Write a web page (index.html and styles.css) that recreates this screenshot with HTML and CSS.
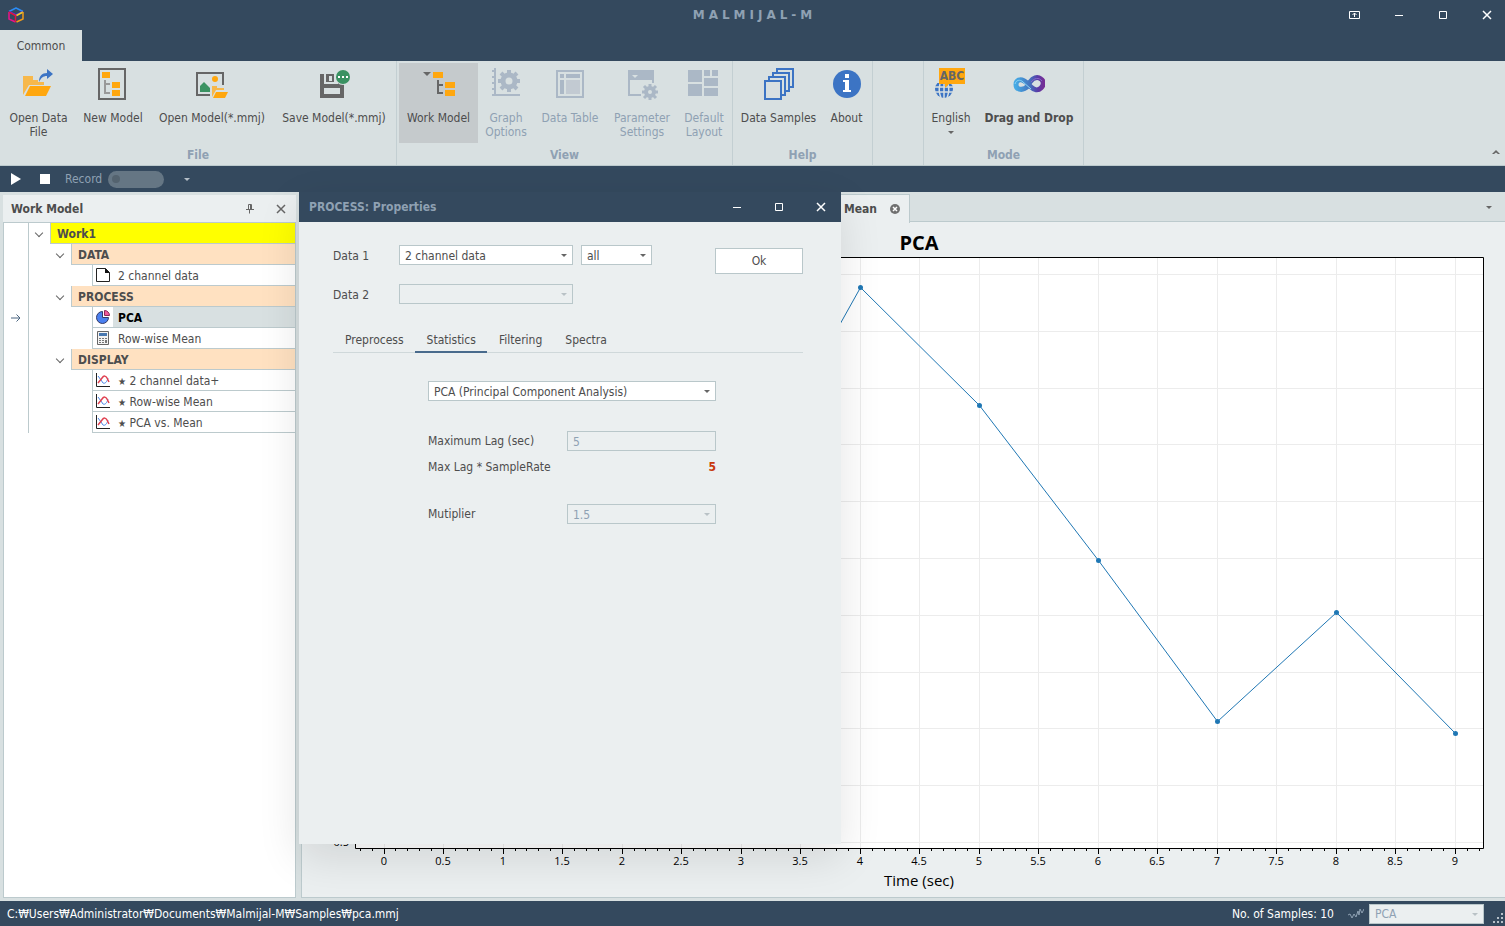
FILE: index.html
```html
<!DOCTYPE html>
<html lang="en">
<head>
    <meta charset="UTF-8">
    <title>MALMIJAL-M</title>
    <link rel="stylesheet" href="styles.css">
</head>
<body>
<header class="titlebar">
    <svg class="logo" width="16" height="16" viewBox="0 0 16 16" fill="none" stroke-width="1.5" stroke-linejoin="round">
        <path d="M1 4.500L8 1l7 3.500" stroke="#2b8cf5"/>
        <path d="M1 4.500L8 8l7-3.500" stroke="#4a35f0"/>
        <path d="M1 5v7l6.500 3" stroke="#e6148c"/>
        <path d="M1 5l6.500 3.500V15" stroke="#e0143c"/>
        <path d="M15 5L8.500 8.500" stroke="#f5d020"/>
        <path d="M15 5v7L8.500 15" stroke="#f09a1a"/>
    </svg>
    <h1>MALMIJAL-M</h1>
    <div class="window-buttons main-buttons">
        <button aria-label="Ribbon display"><svg width="12" height="10" viewBox="0 0 12 10" fill="none" stroke="#fff"><path d="M.5 1.500h10v7H.5zM5.500 7V3M3.500 5l2-2 2 2"/></svg></button>
        <button aria-label="Minimize"><svg width="10" height="10" viewBox="0 0 10 10" stroke="#fff"><path d="M1 5.500h8"/></svg></button>
        <button aria-label="Maximize"><svg width="10" height="10" viewBox="0 0 10 10" fill="none" stroke="#fff"><path d="M1.500 1.500h7v7h-7z"/></svg></button>
        <button aria-label="Close"><svg width="10" height="10" viewBox="0 0 10 10" stroke="#fff" stroke-width="1.500"><path d="M1 1l8 8M9 1L1 9"/></svg></button>
    </div>
</header>

<nav class="ribbon-tabs"><button class="ribbon-tab">Common</button></nav>

<div class="ribbon">
    <section class="group group-file">
        <div class="tools">
            <button class="tool">
                <svg width="32" height="32" viewBox="0 0 32 32"><path d="M0 8h10v4h5v2h6v3H6L0 27z" fill="#f7b84b"/><path d="M7 18h21l-5 10H2z" fill="#ffa70f"/><path d="M16 14c0-6 3-9 8-9V1l6 5-6 5V8c-4 0-6 2-8 6z" fill="#3c74c4"/></svg>
                <span>Open Data<br>File</span>
            </button>
            <button class="tool">
                <svg width="32" height="32" viewBox="0 0 32 32"><path d="M2 1h26v30H2z" fill="none" stroke="#666" stroke-width="2"/><path d="M5 4h8v6H5zM15 14h8v6h-8zM15 22h8v6h-8z" fill="#ffa70f"/><path d="M8 12v13h5M8 16h5" fill="none" stroke="#999" stroke-width="2"/></svg>
                <span>New Model</span>
            </button>
            <button class="tool">
                <svg width="32" height="32" viewBox="0 0 32 32"><path d="M14 27H1V5h26v12" fill="none" stroke="#666" stroke-width="2"/><circle cx="19" cy="11" r="3" fill="#ffa70f"/><path d="M4 24v-6l4-4 6 6v4z" fill="#3a9262"/><path d="M16 18h5v2h7v2h-8l-4 7z" fill="#f7b84b"/><path d="M20 24h12l-3 6H17z" fill="#ffa70f"/></svg>
                <span>Open Model(*.mmj)</span>
            </button>
            <button class="tool">
                <svg width="32" height="32" viewBox="0 0 32 32"><path d="M2 6h4v10h14v-2h6v16H2zM8 6h8v8H8zM6 20v6h16v-6z" fill="#666" fill-rule="evenodd"/><path d="M11 8h3v5h-3z" fill="#d8e0e1"/><circle cx="25" cy="9" r="8" fill="#d8e0e1"/><circle cx="25" cy="9" r="7" fill="#3a9262"/><path d="M20 8h2v2h-2zM24 8h2v2h-2zM28 8h2v2h-2z" fill="#fff"/></svg>
                <span>Save Model(*.mmj)</span>
            </button>
        </div>
        <h2>File</h2>
    </section>
    <section class="group group-view">
        <div class="tools">
            <button class="tool pressed">
                <svg width="32" height="32" viewBox="0 0 32 32"><path d="M0 4h8L4 8z" fill="#666"/><path d="M10 4h10v6H10zM22 14h10v6H22zM22 22h10v6H22z" fill="#ffa70f"/><path d="M15 12v13h5M15 17h5" fill="none" stroke="#666" stroke-width="2"/></svg>
                <span>Work Model</span>
            </button>
            <button class="tool" disabled>
                <svg width="32" height="32" viewBox="0 0 32 32" fill="none" stroke="#abb8c6" stroke-width="2"><path d="M5 0v27h25M2 3h3M2 9h3M2 15h3M2 21h3M2 27h3"/><circle cx="19" cy="13" r="6" stroke-width="5"/><path d="M19 2v4M19 20v4M8 13h4M26 13h4M11 5l3 3M24 18l3 3M27 5l-3 3M14 18l-3 3" stroke-width="4"/></svg>
                <span>Graph<br>Options</span>
            </button>
            <button class="tool" disabled>
                <svg width="32" height="32" viewBox="0 0 32 32"><path d="M3 3h26v26H3z" fill="none" stroke="#abb8c6" stroke-width="2"/><path d="M6 6h4v4H6zM12 6h14v4H12zM6 12h4v14H6z" fill="#abb8c6"/><path d="M12 12h14v14H12z" fill="#c2cad2"/></svg>
                <span>Data Table</span>
            </button>
            <button class="tool" disabled>
                <svg width="32" height="32" viewBox="0 0 32 32"><path d="M2 2h26v13h-2v-3H4v14h11v2H2z" fill="#abb8c6"/><path d="M6 7h6l-3 3z" fill="#d8e0e1"/><g fill="none" stroke="#abb8c6"><circle cx="24" cy="24" r="4" stroke-width="4"/><path d="M24 16v3M24 29v3M16 24h3M29 24h3M18 18l3 3M27 27l3 3M30 18l-3 3M21 27l-3 3" stroke-width="3"/></g></svg>
                <span>Parameter<br>Settings</span>
            </button>
            <button class="tool" disabled>
                <svg width="32" height="32" viewBox="0 0 32 32"><path d="M0 2h14v12H0zM0 16h14v12H0zM16 2h6v6h-6zM24 2h6v6h-6zM16 10h14v8H16zM16 20h14v8H16z" fill="#abb8c6"/></svg>
                <span>Default<br>Layout</span>
            </button>
        </div>
        <h2>View</h2>
    </section>
    <section class="group group-help">
        <div class="tools">
            <button class="tool">
                <svg width="32" height="32" viewBox="0 0 32 32" fill="none" stroke="#3c74c4" stroke-width="2"><path d="M2 13h16v18H2zM6 12V9h16v18h-3M10 8V5h16v18h-3M14 4V1h16v18h-3"/></svg>
                <span>Data Samples</span>
            </button>
            <button class="tool">
                <svg width="32" height="32" viewBox="0 0 32 32"><circle cx="16" cy="16" r="14" fill="#3c74c4"/><path d="M14 6h4v4h-4zM12 12h6v10h2v2h-8v-2h2v-8h-2z" fill="#fff"/></svg>
                <span>About</span>
            </button>
        </div>
        <h2>Help</h2>
    </section>
    <section class="group group-empty"></section>
    <section class="group group-mode">
        <div class="tools">
            <button class="tool">
                <svg width="32" height="32" viewBox="0 0 32 32"><circle cx="9" cy="21" r="9" fill="#3c74c4"/><path d="M0 19h18M0 24h18M9 14v17M5 16q-2 6 1 14M13 16q2 6-1 14" fill="none" stroke="#d8e0e1" stroke-width="1.500"/><path d="M0 10h18v5H0z" fill="#d8e0e1"/><path d="M4 0h26v16H14l-4 4v-4H4z" fill="#ffa70f"/><text x="17" y="12" class="icon-text">ABC</text></svg>
                <span>English</span>
                <i class="caret"></i>
            </button>
            <button class="tool strong">
                <svg width="32" height="32" viewBox="0 0 32 32" fill="none">
                    <defs><linearGradient id="loop" x1="0" x2="1"><stop offset="0" stop-color="#45a9e4"/><stop offset=".5" stop-color="#4474be"/><stop offset=".8" stop-color="#593ba8"/><stop offset="1" stop-color="#752f96"/></linearGradient></defs>
                    <path d="M15 18c-3 3-6 4-9 3-4-1-4-8 0-9 3-1 6 1 9 4l3 3c3 3 7 4 10 1 3-3 3-7 0-9-4-3-8-1-11 3z" stroke="url(#loop)" stroke-width="5"/>
                    <path d="M2 16c1-4 5-5 8-2l8 7" stroke="#8bd5f5"/>
                    <path d="M18 14c3-4 8-5 11-1" stroke="#8b68c9"/>
                </svg>
                <span>Drag and Drop</span>
            </button>
        </div>
        <h2>Mode</h2>
    </section>
    <button class="collapse" aria-label="Collapse ribbon"><svg width="8" height="5" viewBox="0 0 8 5"><path d="M0 5l4-4 4 4H6L4 3.500 2 5z" fill="#666"/></svg></button>
</div>

<div class="quickbar">
    <button aria-label="Run"><svg width="10" height="12" viewBox="0 0 10 12"><path d="M0 0l10 6-10 6z" fill="#fff"/></svg></button>
    <button aria-label="Stop"><svg width="10" height="10" viewBox="0 0 10 10"><path d="M0 0h10v10H0z" fill="#fff"/></svg></button>
    <label for="record">Record</label>
    <input type="checkbox" id="record" class="switch" disabled>
    <i class="caret light"></i>
</div>

<main class="workspace">
    <aside class="panel">
        <div class="panel-head">
            <h2>Work Model</h2>
            <button aria-label="Pin"><svg width="8" height="10" viewBox="0 0 8 10" fill="none" stroke="#666"><path d="M2.500 5.500v-5h3v5M4.500.5v5M0 5.500h8M3.500 6v3.500"/></svg></button>
            <button aria-label="Close panel"><svg width="10" height="10" viewBox="0 0 10 10" stroke="#666" stroke-width="1.500"><path d="M1 1l8 8M9 1L1 9"/></svg></button>
        </div>
        <div class="tree-area">
            <ul class="tree">
                <li class="level1"><i class="mark"></i><i class="fold"></i><span class="root">Work1</span></li>
                <li class="level2"><i class="mark"></i><i class="fold"></i><span class="category">DATA</span></li>
                <li class="level3"><i class="mark"></i><span class="item"><svg width="14" height="14" viewBox="0 0 14 14"><path d="M.5.5h9l4 4v9H.5z" fill="#fff" stroke="#222"/><path d="M9 0l5 5H9z" fill="#111"/></svg><b>2 channel data</b></span></li>
                <li class="level2"><i class="mark"></i><i class="fold"></i><span class="category">PROCESS</span></li>
                <li class="level3 selected"><i class="mark"><svg width="10" height="8" viewBox="0 0 10 8" fill="none" stroke="#4a6580"><path d="M0 4h9M5.500 .5L9 4 5.500 7.500"/></svg></i><span class="item"><svg width="14" height="14" viewBox="0 0 14 14"><path d="M6.500 1.500v6h6a6 6 0 1 1-6-6z" fill="#4a80f0" stroke="#333a66"/><path d="M8.500.5a5 5 0 0 1 5 5h-5z" fill="#f05a9c" stroke="#8c2858"/></svg><b>PCA</b></span></li>
                <li class="level3"><i class="mark"></i><span class="item"><svg width="14" height="14" viewBox="0 0 14 14"><path d="M1.500.5h11v13h-11z" fill="#f3f3f3" stroke="#666"/><path d="M3 2h8v3H3z" fill="#4878b0"/><path d="M3 7h2v1H3zM6 7h2v1H6zM9 7h2v1H9zM3 9h2v1H3zM6 9h2v1H6zM3 11h2v1H3zM6 11h2v1H6zM9 9h2v3H9z" fill="#777"/></svg><b>Row-wise Mean</b></span></li>
                <li class="level2"><i class="mark"></i><i class="fold"></i><span class="category">DISPLAY</span></li>
                <li class="level3"><i class="mark"></i><span class="item"><svg width="14" height="14" viewBox="0 0 14 14" fill="none"><path d="M.5 0v13.500H14" stroke="#222"/><path d="M2 3l3 4 2 3c2 1 4-1 5-5" stroke="#4a86e8"/><path d="M2 10l4-5c2-3 4-2 5 0l2 4" stroke="#e04050" stroke-width="1.500"/></svg><b><em>★</em> 2 channel data+</b></span></li>
                <li class="level3"><i class="mark"></i><span class="item"><svg width="14" height="14" viewBox="0 0 14 14" fill="none"><path d="M.5 0v13.500H14" stroke="#222"/><path d="M2 3l3 4 2 3c2 1 4-1 5-5" stroke="#4a86e8"/><path d="M2 10l4-5c2-3 4-2 5 0l2 4" stroke="#e04050" stroke-width="1.500"/></svg><b><em>★</em> Row-wise Mean</b></span></li>
                <li class="level3"><i class="mark"></i><span class="item"><svg width="14" height="14" viewBox="0 0 14 14" fill="none"><path d="M.5 0v13.500H14" stroke="#222"/><path d="M2 3l3 4 2 3c2 1 4-1 5-5" stroke="#4a86e8"/><path d="M2 10l4-5c2-3 4-2 5 0l2 4" stroke="#e04050" stroke-width="1.500"/></svg><b><em>★</em> PCA vs. Mean</b></span></li>
            </ul>
        </div>
    </aside>

    <section class="document">
        <div class="doc-tabs">
            <div class="doc-tab">
                <span>Mean</span>
                <button aria-label="Close tab"><svg width="10" height="10" viewBox="0 0 10 10"><circle cx="5" cy="5" r="5" fill="#707070"/><path d="M3 3l4 4M7 3L3 7" stroke="#fff" stroke-width="1.500"/></svg></button>
            </div>
            <i class="caret"></i>
        </div>
        <div class="chart"><svg id="chart"></svg></div>
    </section>

    <section class="dialog" role="dialog" aria-label="PROCESS: Properties">
        <div class="dialog-head">
            <h2>PROCESS: Properties</h2>
            <div class="window-buttons">
                <button aria-label="Minimize dialog"><svg width="10" height="10" viewBox="0 0 10 10" stroke="#fff"><path d="M1 5.500h8"/></svg></button>
                <button aria-label="Maximize dialog"><svg width="10" height="10" viewBox="0 0 10 10" fill="none" stroke="#fff"><path d="M1.500 1.500h7v7h-7z"/></svg></button>
                <button aria-label="Close dialog"><svg width="10" height="10" viewBox="0 0 10 10" stroke="#fff" stroke-width="1.500"><path d="M1 1l8 8M9 1L1 9"/></svg></button>
            </div>
        </div>
        <div class="dialog-body">
            <div class="data-form">
                <label for="data1">Data 1</label>
                <div class="combo"><select id="data1"><option>2 channel data</option></select></div>
                <div class="combo"><select aria-label="Channel"><option>all</option></select></div>
                <button class="ok">Ok</button>
                <label for="data2">Data 2</label>
                <div class="combo off"><select id="data2" disabled><option></option></select></div>
            </div>
            <div class="tabs" role="tablist">
                <button role="tab">Preprocess</button>
                <button role="tab" class="active">Statistics</button>
                <button role="tab">Filtering</button>
                <button role="tab">Spectra</button>
            </div>
            <div class="stats">
                <div class="combo"><select aria-label="Method"><option>PCA (Principal Component Analysis)</option></select></div>
                <div class="stats-row lag">
                    <label for="max_lag">Maximum Lag (sec)</label>
                    <input type="text" id="max_lag" value="5" disabled>
                </div>
                <div class="stats-row rate"><span>Max Lag * SampleRate</span><strong>5</strong></div>
                <div class="stats-row multiplier">
                    <label for="multiplier">Mutiplier</label>
                    <div class="combo off"><select id="multiplier" disabled><option>1.5</option></select></div>
                </div>
            </div>
        </div>
    </section>
</main>

<footer class="statusbar">
    <span class="path">C:₩Users₩Administrator₩Documents₩Malmijal-M₩Samples₩pca.mmj</span>
    <span>No. of Samples: 10</span>
    <svg width="16" height="14" viewBox="0 0 16 14" fill="none" stroke="#8fa1b3"><path d="M0 8l2-1 2 4 2-4 2 3 2-6 1 4 1-6 2 4 2-4"/></svg>
    <div class="combo off"><select aria-label="Series" disabled><option>PCA</option></select></div>
    <svg class="grip" width="10" height="10" viewBox="0 0 10 10" fill="#b5bfc8"><path d="M8 0h2v2H8zM4 4h2v2H4zM8 4h2v2H8zM0 8h2v2H0zM4 8h2v2H4zM8 8h2v2H8z"/></svg>
</footer>

<script src="chart.js"></script>
</body>
</html>
```
FILE: styles.css
```css
* {
    box-sizing: border-box;
}

body {
    margin: 0;
    min-height: 100vh;
    display: flex;
    flex-direction: column;
    font-family: "DejaVu Sans Condensed", "DejaVu Sans", "Noto Sans CJK KR", sans-serif;
    font-size: 12px;
    line-height: 14px;
    color: #4d4d4d;
    background-color: #34495e;
}

h1, h2, ul {
    margin: 0;
    padding: 0;
    font-size: 12px;
}

button, select, input {
    font: inherit;
    color: inherit;
    margin: 0;
    padding: 0;
    border: 0;
    background: none;
}

svg {
    display: block;
    flex: none;
}

.caret {
    width: 0;
    height: 0;
    border: 3px solid transparent;
    border-top-color: #666;
    border-bottom: 0;
}

.caret.light {
    border-top-color: #b5bfc8;
}

/* title bar */
.titlebar {
    position: relative;
    height: 30px;
    display: flex;
    align-items: center;
    justify-content: center;
}

.titlebar h1 {
    font-family: "DejaVu Sans", sans-serif;
    letter-spacing: 4px;
    padding-left: 4px;
    color: #8fa1b3;
}

.logo {
    position: absolute;
    left: 8px;
    top: 7px;
}

.window-buttons {
    display: flex;
    gap: 12px;
}

.window-buttons button {
    width: 30px;
    height: 30px;
    display: flex;
    align-items: center;
    justify-content: center;
}

.main-buttons {
    position: absolute;
    right: 3px;
    top: 0;
    gap: 14px;
}

/* ribbon */
.ribbon-tabs {
    height: 31px;
}

.ribbon-tab {
    width: 82px;
    height: 31px;
    background-color: #d8e0e1;
}

.ribbon {
    position: relative;
    display: flex;
    height: 105px;
    background-color: #d8e0e1;
    border-bottom: 1px solid #bccacd;
}

.group {
    padding: 2px;
    border-right: 1px solid #c3cfd2;
}

.tools {
    display: grid;
    gap: 1px;
    height: 80px;
}

.group-file .tools {
    grid-template-columns: 73px 74px 122px 120px;
}

.group-view .tools {
    grid-template-columns: 79px 54px 72px 70px 52px;
}

.group-help .tools {
    grid-template-columns: 87px 47px;
}

.group-mode .tools {
    grid-template-columns: 50px 104px;
}

.group-empty {
    width: 51px;
}

.tool {
    display: flex;
    flex-direction: column;
    align-items: center;
    padding-top: 5px;
    white-space: nowrap;
}

.tool span {
    margin-top: 11px;
}

.tool .caret {
    margin-top: 6px;
}

.tool:disabled {
    color: #8fa1b3;
}

.tool.pressed {
    background-color: #c5cacc;
}

.strong {
    font-weight: bold;
}

.icon-text {
    font-size: 12px;
    font-weight: bold;
    text-anchor: middle;
    fill: #666;
}

.group h2 {
    margin-top: 5px;
    text-align: center;
    color: #8fa1b3;
}

.collapse {
    position: absolute;
    right: 5px;
    bottom: 11px;
}

.quickbar {
    height: 26px;
    display: flex;
    align-items: center;
    padding-left: 11px;
    color: #8fa1b3;
}

.quickbar button + button {
    margin: 0 15px 0 19px;
}

.switch {
    appearance: none;
    width: 56px;
    height: 17px;
    margin: 0 20px 0 6px;
    padding: 4px;
    border-radius: 9px;
    background-color: #657684;
}

.switch::before {
    content: "";
    display: block;
    width: 8px;
    height: 8px;
    border-radius: 50%;
    background-color: #54636f;
}

/* work area */
.workspace {
    position: relative;
    flex: 1;
    display: flex;
    gap: 5px;
    padding: 0 0 3px 3px;
    min-height: 652px;
    background-color: #d8e0e1;
}

.panel {
    width: 293px;
    margin-top: 3px;
    display: flex;
    flex-direction: column;
}

.panel-head {
    display: flex;
    align-items: center;
    height: 27px;
    padding: 0 10px 0 8px;
    background-color: #ebeff0;
}

.panel-head h2 {
    flex: 1;
}

.panel-head button + button {
    margin-left: 22px;
}

.tree-area {
    flex: 1;
    background-color: #fff;
    border: 1px solid #bccacd;
}

.tree {
    list-style: none;
}

.tree li {
    display: flex;
    height: 21px;
}

.mark {
    display: flex;
    align-items: center;
    width: 25px;
    padding-left: 7px;
    border-right: 1px solid #bccacd;
}

.tree .level3 .mark {
    margin-right: 63px;
}

.tree .level2 .mark {
    margin-right: 21px;
}

.fold {
    width: 21px;
    padding: 7px;
}

.fold::before {
    content: "";
    display: block;
    width: 5px;
    height: 5px;
    border: solid #666;
    border-width: 0 1px 1px 0;
    rotate: 45deg;
}

.tree span {
    flex: 1;
    display: flex;
    border-left: 1px solid #bccacd;
    border-bottom: 1px solid #bccacd;
    line-height: 22px;
}

.root, .category {
    padding-left: 6px;
    font-weight: bold;
}

.root {
    background-color: #ff0;
}

.category {
    background-color: #ffe1c1;
}

.item svg {
    margin: 3px 3px 0;
}

.item b {
    flex: 1;
    height: 20px;
    padding-left: 5px;
    font-weight: normal;
}

.item em {
    font-style: normal;
    font-size: 10px;
}

.selected b {
    font-weight: bold;
    color: #000;
    background-color: #d8e0e1;
}

.document {
    flex: 1;
    min-width: 0;
    display: flex;
    flex-direction: column;
    border-left: 1px solid #bccacd;
    border-bottom: 1px solid #bccacd;
    background-color: #ebeff0;
}

.doc-tabs {
    display: flex;
    align-items: center;
    justify-content: space-between;
    height: 30px;
    padding: 2px 13px 0 0;
    background-color: #d8e0e1;
    border-bottom: 1px solid #bccacd;
}

.doc-tab {
    display: flex;
    align-items: center;
    justify-content: flex-end;
    gap: 13px;
    width: 608px;
    height: 29px;
    margin-bottom: -1px;
    padding-right: 9px;
    font-weight: bold;
    background-color: #ebeff0;
    border: 1px solid #bccacd;
    border-bottom: 0;
}

.chart {
    position: relative;
    flex: 1;
}

.chart svg {
    position: absolute;
    width: 100%;
    height: 100%;
    font-family: "Open Sans", sans-serif;
    font-size: 11px;
    fill: #000;
}

.grid {
    stroke: #ececec;
}

.axis {
    stroke: #000;
    fill: none;
}

.series {
    fill: none;
    stroke: #1f77b4;
    stroke-width: 1;
}

.dot {
    fill: #1f77b4;
}

.chart .chart-title {
    font-size: 20px;
    font-weight: bold;
}

.chart .axis-title {
    font-size: 15px;
}

/* floating dialog */
.dialog {
    position: absolute;
    left: 299px;
    top: 0;
    width: 542px;
    height: 652px;
    background-color: #ebeff0;
    box-shadow: 0 14px 40px rgba(0, 0, 0, 0.11);
}

.dialog-head {
    display: flex;
    align-items: center;
    justify-content: space-between;
    height: 30px;
    padding: 0 5px 0 10px;
    color: #8fa1b3;
    background-color: #34495e;
}

.dialog-body {
    padding: 23px 38px 0 34px;
}

.data-form {
    display: grid;
    grid-template-columns: 58px 174px 71px 1fr;
    gap: 19px 8px;
    align-items: center;
}

.data-form label {
    padding-top: 2px;
}

.ok {
    grid-row: span 2;
    justify-self: end;
    align-self: start;
    width: 88px;
    height: 26px;
    margin-top: 3px;
    background-color: #fff;
    border: 1px solid #b9c7ca;
}

.combo {
    position: relative;
}

.combo::after {
    content: "";
    position: absolute;
    right: 6px;
    top: 9px;
    border: 3px solid transparent;
    border-top-color: #666;
    border-bottom: 0;
    pointer-events: none;
}

.combo.off::after {
    border-top-color: #b9c2c6;
}

.combo select, .stats input {
    display: block;
    appearance: none;
    width: 100%;
    height: 20px;
    padding: 1px 5px 0;
    background-color: #fff;
    border: 1px solid #b9c7ca;
}

.combo select:disabled, .stats input:disabled {
    opacity: 1;
    color: #8fa1b3;
    background-color: #ebeff0;
}

.tabs {
    display: flex;
    height: 24px;
    margin-top: 25px;
    border-bottom: 1px solid #cfd8da;
}

.tabs button {
    height: 24px;
    padding: 0 11px 0 12px;
    border-bottom: 2px solid transparent;
}

.tabs .active {
    border-bottom-color: #486a8c;
}

.stats {
    padding: 28px 87px 0 95px;
}

.stats-row {
    display: flex;
    align-items: center;
    justify-content: space-between;
    height: 20px;
}

.stats-row .combo, .stats-row input {
    width: 149px;
}

.lag {
    margin-top: 30px;
}

.rate {
    margin-top: 6px;
}

.rate strong {
    color: #c8380c;
}

.multiplier {
    margin-top: 27px;
}

.statusbar {
    display: flex;
    align-items: center;
    height: 25px;
    padding: 0 2px 0 7px;
    color: #fff;
}

.path {
    flex: 1;
}

.statusbar .combo {
    width: 115px;
    margin-left: 5px;
}

.statusbar svg {
    margin-left: 14px;
}

.statusbar .grip {
    margin: 8px 0 0 9px;
}
```
FILE: chart.js
```js
const svg = document.getElementById("chart");
const points = [[3, 2.51], [4, 4.386], [5, 3.347], [6, 1.982], [7, 0.565], [8, 1.525], [9, 0.46]];
const xRange = [-0.24, 9.235];
const yRange = [-0.553, 4.65];

function add(tag, attrs, text) {
    const el = document.createElementNS("http://www.w3.org/2000/svg", tag);
    for (const key in attrs) el.setAttribute(key, attrs[key]);
    if (text !== undefined) el.textContent = text;
    svg.appendChild(el);
}

function draw() {
    svg.innerHTML = "";
    const left = 53, top = 35;
    const right = svg.clientWidth - 22;
    const bottom = svg.clientHeight - 49;
    const px = x => Math.round(left + (x - xRange[0]) / (xRange[1] - xRange[0]) * (right - left));
    const py = y => Math.round(bottom - (y - yRange[0]) / (yRange[1] - yRange[0]) * (bottom - top));

    add("rect", { x: left, y: top, width: right - left, height: bottom - top, fill: "#fff" });

    let grid = "";
    for (let y = -0.5; y <= 4.5; y += 0.5) grid += `M${left} ${py(y) + 0.5}H${right}`;
    for (let x = 0; x <= 9; x += 0.5) grid += `M${px(x) + 0.5} ${top}V${bottom}`;
    add("path", { d: grid, class: "grid" });

    let axis = `M${left + 0.5} ${top + 0.5}H${right + 0.5}V${bottom + 0.5}H${left + 0.5}Z`;
    for (let i = -2; i <= 92; i++) {
        axis += `M${px(i / 10) + 0.5} ${bottom}v${i % 5 === 0 ? 6 : 3}`;
    }
    add("path", { d: axis, class: "axis" });

    add("polyline", { points: points.map(p => `${px(p[0]) + 0.5},${py(p[1]) + 0.5}`).join(" "), class: "series" });
    points.slice(1).forEach(p => add("circle", { cx: px(p[0]) + 0.5, cy: py(p[1]) + 0.5, r: 2.5, class: "dot" }));

    for (let x = 0; x <= 9; x += 0.5) {
        add("text", { x: px(x), y: bottom + 17, "text-anchor": "middle" }, x);
    }
    add("text", { x: left - 6, y: py(-0.5) + 4, "text-anchor": "end" }, "-0.5");
    add("text", { x: (left + right) / 2, y: top - 7, "text-anchor": "middle", class: "chart-title" }, "PCA");
    add("text", { x: (left + right) / 2, y: bottom + 38, "text-anchor": "middle", class: "axis-title" }, "Time (sec)");
}

draw();
window.addEventListener("resize", draw);
```
